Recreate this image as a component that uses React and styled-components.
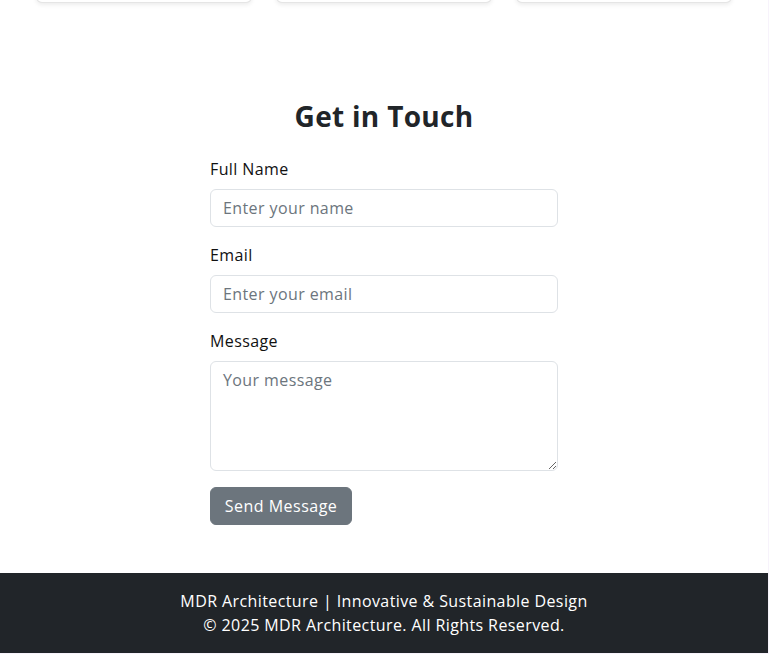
import React from "react";
import styled, { createGlobalStyle } from "styled-components";

const Global = createGlobalStyle`
  html { background: #f7f3fb; }
  body {
    margin: 0;
    font-family: "Open Sans", "Liberation Sans", sans-serif;
    color: #212529;
    font-size: 16px;
    line-height: 1.5;
    letter-spacing: 0.4px;
  }
  * { box-sizing: border-box; }
`;

const Page = styled.div`
  width: 768px;
  background: #fff;
  overflow: hidden;
`;

const CardRow = styled.div`
  display: grid;
  grid-template-columns: repeat(3, 1fr);
  gap: 24px;
  padding: 0 36px;
  margin-top: -20px;
  padding-bottom: 96px;
`;

const Card = styled.div`
  height: 23px;
  background: #fff;
  border: 1px solid rgba(0, 0, 0, 0.1);
  border-radius: 6px;
  box-shadow: 0 0.125rem 0.25rem rgba(0, 0, 0, 0.075);
`;

const Section = styled.section`
  padding-bottom: 48px;
  display: flex;
  flex-direction: column;
  align-items: center;
`;

const Heading = styled.h2`
  margin: 0 0 24px;
  font-size: 28px;
  line-height: 34px;
  font-weight: 700;
  letter-spacing: 0.3px;
  color: #212529;
  text-align: center;
`;

const Form = styled.form`
  width: 348px;
  display: flex;
  flex-direction: column;
`;

const Field = styled.div`
  display: flex;
  flex-direction: column;
  margin-bottom: 16px;
`;

const Label = styled.label`
  font-size: 16px;
  line-height: 24px;
  margin-bottom: 8px;
  color: #111;
`;

const Input = styled.input`
  height: 38px;
  padding: 6px 12px;
  font: inherit;
  font-size: 16px;
  line-height: 24px;
  letter-spacing: 0.4px;
  color: #212529;
  border: 1px solid #dee2e6;
  border-radius: 6px;
  outline: none;
  &::placeholder { color: #6c757d; opacity: 1; }
`;

const TextArea = styled.textarea`
  height: 110px;
  padding: 6px 12px;
  font: inherit;
  font-size: 16px;
  line-height: 24px;
  letter-spacing: 0.4px;
  color: #212529;
  border: 1px solid #dee2e6;
  border-radius: 6px;
  outline: none;
  resize: vertical;
  &::placeholder { color: #6c757d; opacity: 1; }
`;

const Button = styled.button`
  align-self: flex-start;
  height: 38px;
  width: 142px;
  padding: 6px 12px;
  font: inherit;
  font-size: 16px;
  line-height: 24px;
  letter-spacing: 0.5px;
  color: #fff;
  background: #6c757d;
  border: 1px solid #6c757d;
  border-radius: 6px;
`;

const Footer = styled.footer`
  background: #212529;
  color: #fff;
  padding: 16px 0;
  text-align: center;
`;

const FooterLine = styled.p`
  margin: 0;
  font-size: 16px;
  line-height: 24px;
`;

export default function App() {
  return (
    <>
      <Global />
      <Page>
        <CardRow>
          <Card />
          <Card />
          <Card />
        </CardRow>
        <Section>
          <Heading>Get in Touch</Heading>
          <Form onSubmit={(e) => e.preventDefault()}>
            <Field>
              <Label>Full Name</Label>
              <Input placeholder="Enter your name" />
            </Field>
            <Field>
              <Label>Email</Label>
              <Input type="email" placeholder="Enter your email" />
            </Field>
            <Field>
              <Label>Message</Label>
              <TextArea placeholder="Your message" />
            </Field>
            <Button type="submit">Send Message</Button>
          </Form>
        </Section>
        <Footer>
          <FooterLine>MDR Architecture | Innovative &amp; Sustainable Design</FooterLine>
          <FooterLine>© 2025 MDR Architecture. All Rights Reserved.</FooterLine>
        </Footer>
      </Page>
    </>
  );
}
